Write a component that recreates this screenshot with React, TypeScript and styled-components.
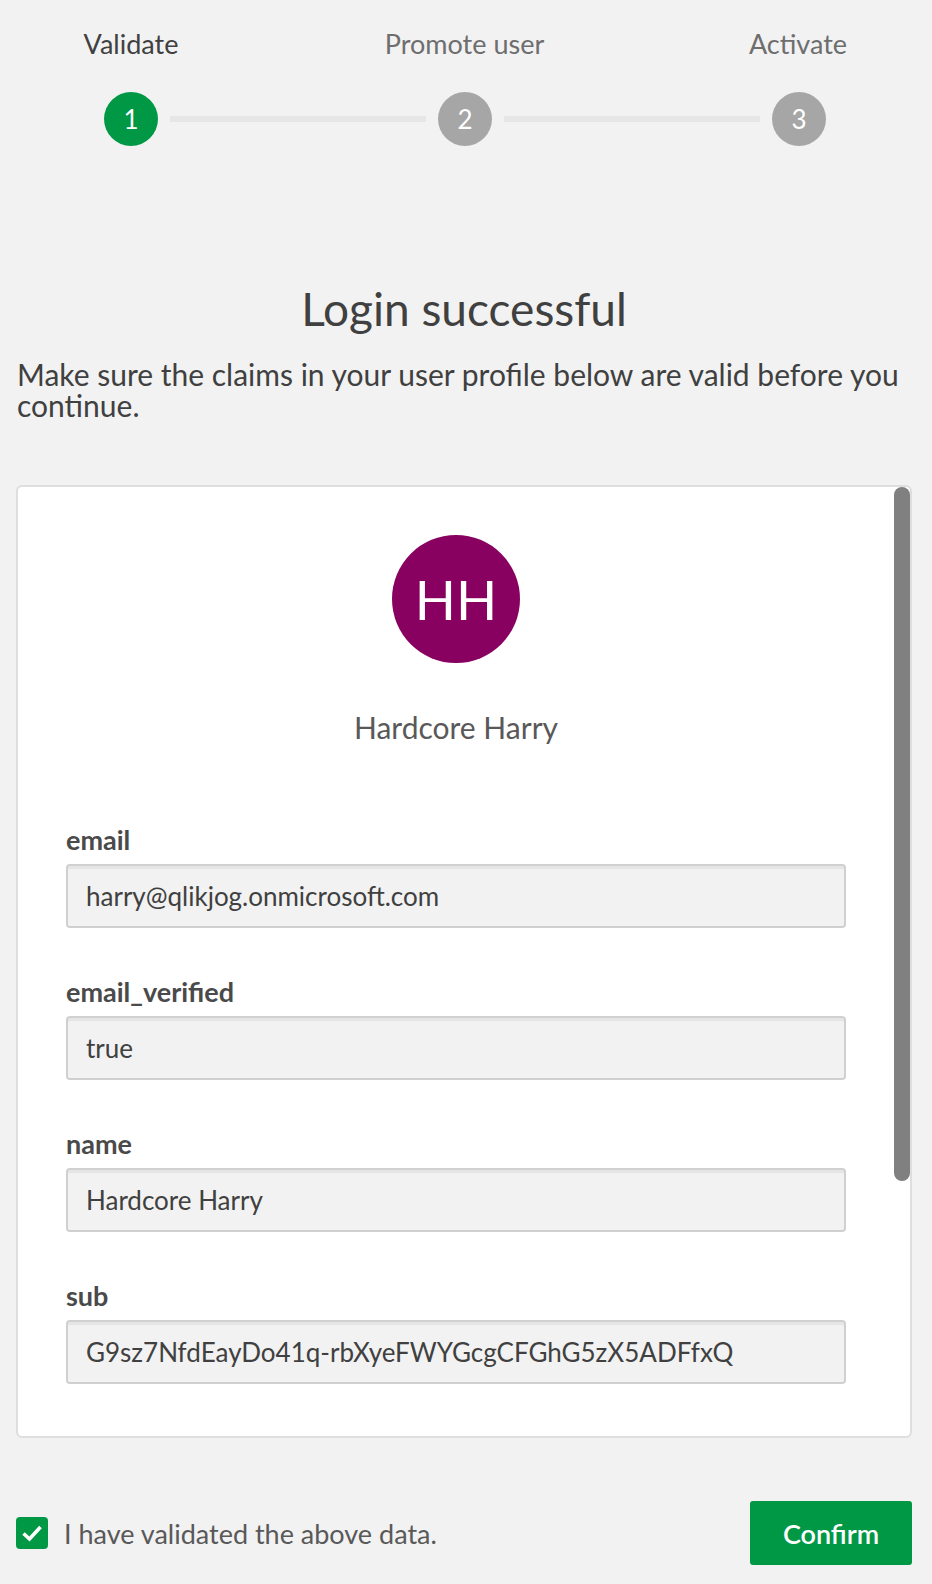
import React from "react";
import styled, { createGlobalStyle } from "styled-components";

const GlobalStyle = createGlobalStyle`
  html, body {
    margin: 0;
    padding: 0;
    background: #f2f2f2;
  }
  body {
    font-family: Lato, "Open Sans", "Noto Sans", sans-serif;
    color: #404040;
  }
  * { box-sizing: border-box; }
`;

const Page = styled.div`
  width: 932px;
  min-height: 1584px;
  padding: 0 20px 18px 16px;
  display: flex;
  flex-direction: column;
`;

const Stepper = styled.div`
  display: flex;
  flex-direction: column;
  margin: 0 -20px 0 -16px;
  padding-top: 29px;
`;

const LabelRow = styled.div`
  display: flex;
  justify-content: space-between;
  padding: 0 69px 0 66px;
`;

const StepLabel = styled.div<{ $active?: boolean }>`
  width: 130px;
  display: flex;
  justify-content: center;
  font-size: 27px;
  line-height: 30px;
  white-space: nowrap;
  color: ${(p) => (p.$active ? "#404040" : "#6e6e6e")};
`;

const Track = styled.div`
  display: flex;
  align-items: center;
  padding: 0 106px 0 104px;
  margin-top: 33px;
`;

const StepCircle = styled.div<{ $active?: boolean }>`
  width: 54px;
  height: 54px;
  flex: none;
  border-radius: 50%;
  background: ${(p) => (p.$active ? "#009845" : "#a6a6a6")};
  color: #fff;
  font-size: 26px;
  display: flex;
  align-items: center;
  justify-content: center;
`;

const Connector = styled.div`
  flex: 1;
  height: 6px;
  margin: 0 12px;
  background: #e6e6e6;
`;

const Heading = styled.h1`
  margin: 138px 0 0;
  font-size: 46px;
  line-height: 50px;
  font-weight: 400;
  text-align: center;
  color: #404040;
`;

const Intro = styled.p`
  margin: 25px 0 0 1px;
  font-size: 30px;
  line-height: 31px;
  color: #404040;
`;

const Card = styled.div`
  position: relative;
  margin-top: 64px;
  background: #fff;
  border: 2px solid #dedede;
  border-radius: 6px;
  overflow: hidden;
  padding: 48px 64px 52px 48px;
  display: flex;
  flex-direction: column;
`;

const ScrollThumb = styled.div`
  position: absolute;
  top: 0;
  right: 0;
  width: 16px;
  height: 694px;
  border-radius: 8px;
  background: #808080;
`;

const Avatar = styled.div`
  align-self: center;
  width: 128px;
  height: 128px;
  border-radius: 50%;
  background: #880060;
  color: #fff;
  font-size: 54px;
  font-weight: 400;
  display: flex;
  align-items: center;
  justify-content: center;
`;

const UserName = styled.div`
  margin-top: 47px;
  text-align: center;
  font-size: 30px;
  line-height: 34px;
  color: #595959;
`;

const Fields = styled.div`
  display: flex;
  flex-direction: column;
  margin-top: 81px;
  gap: 49px;
`;

const Field = styled.div`
  display: flex;
  flex-direction: column;
  gap: 9px;
`;

const FieldLabel = styled.label`
  font-size: 27px;
  line-height: 30px;
  font-weight: 700;
  color: #4a4a4a;
`;

const FieldValue = styled.div`
  height: 64px;
  display: flex;
  align-items: center;
  padding: 0 18px;
  background: #f2f2f2;
  border: 2px solid #d0d0d0;
  border-radius: 4px;
  box-shadow: inset 0 3px 0 rgba(0, 0, 0, 0.05);
  font-size: 26px;
  color: #404040;
  white-space: nowrap;
`;

const Footer = styled.div`
  margin-top: 63px;
  display: flex;
  align-items: center;
  justify-content: space-between;
`;

const CheckRow = styled.label`
  display: flex;
  align-items: center;
  gap: 16px;
  font-size: 27px;
  color: #595959;
`;

const CheckBox = styled.span`
  width: 32px;
  height: 32px;
  border-radius: 4px;
  background: #009845;
  display: flex;
  align-items: center;
  justify-content: center;
`;

const ConfirmButton = styled.button`
  width: 162px;
  height: 64px;
  border: none;
  border-radius: 3px;
  background: #009845;
  color: #fff;
  font-family: inherit;
  font-size: 27px;
  font-weight: 600;
  cursor: pointer;
`;

const steps = ["Validate", "Promote user", "Activate"];

const claims: [string, string][] = [
  ["email", "harry@qlikjog.onmicrosoft.com"],
  ["email_verified", "true"],
  ["name", "Hardcore Harry"],
  ["sub", "G9sz7NfdEayDo41q-rbXyeFWYGcgCFGhG5zX5ADFfxQ"],
];

export default function App() {
  return (
    <>
      <GlobalStyle />
      <Page>
        <Stepper>
          <LabelRow>
            {steps.map((s, i) => (
              <StepLabel key={s} $active={i === 0}>
                {s}
              </StepLabel>
            ))}
          </LabelRow>
          <Track>
            <StepCircle $active>1</StepCircle>
            <Connector />
            <StepCircle>2</StepCircle>
            <Connector />
            <StepCircle>3</StepCircle>
          </Track>
        </Stepper>
        <Heading>Login successful</Heading>
        <Intro>
          Make sure the claims in your user profile below are valid before you continue.
        </Intro>
        <Card>
          <ScrollThumb />
          <Avatar>HH</Avatar>
          <UserName>Hardcore Harry</UserName>
          <Fields>
            {claims.map(([k, v]) => (
              <Field key={k}>
                <FieldLabel>{k}</FieldLabel>
                <FieldValue>{v}</FieldValue>
              </Field>
            ))}
          </Fields>
        </Card>
        <Footer>
          <CheckRow>
            <CheckBox>
              <svg width="22" height="18" viewBox="0 0 22 18">
                <path d="M2.5 9.5 L8.5 15 L19.5 3" fill="none" stroke="#fff" strokeWidth="3.6" />
              </svg>
            </CheckBox>
            I have validated the above data.
          </CheckRow>
          <ConfirmButton>Confirm</ConfirmButton>
        </Footer>
      </Page>
    </>
  );
}
